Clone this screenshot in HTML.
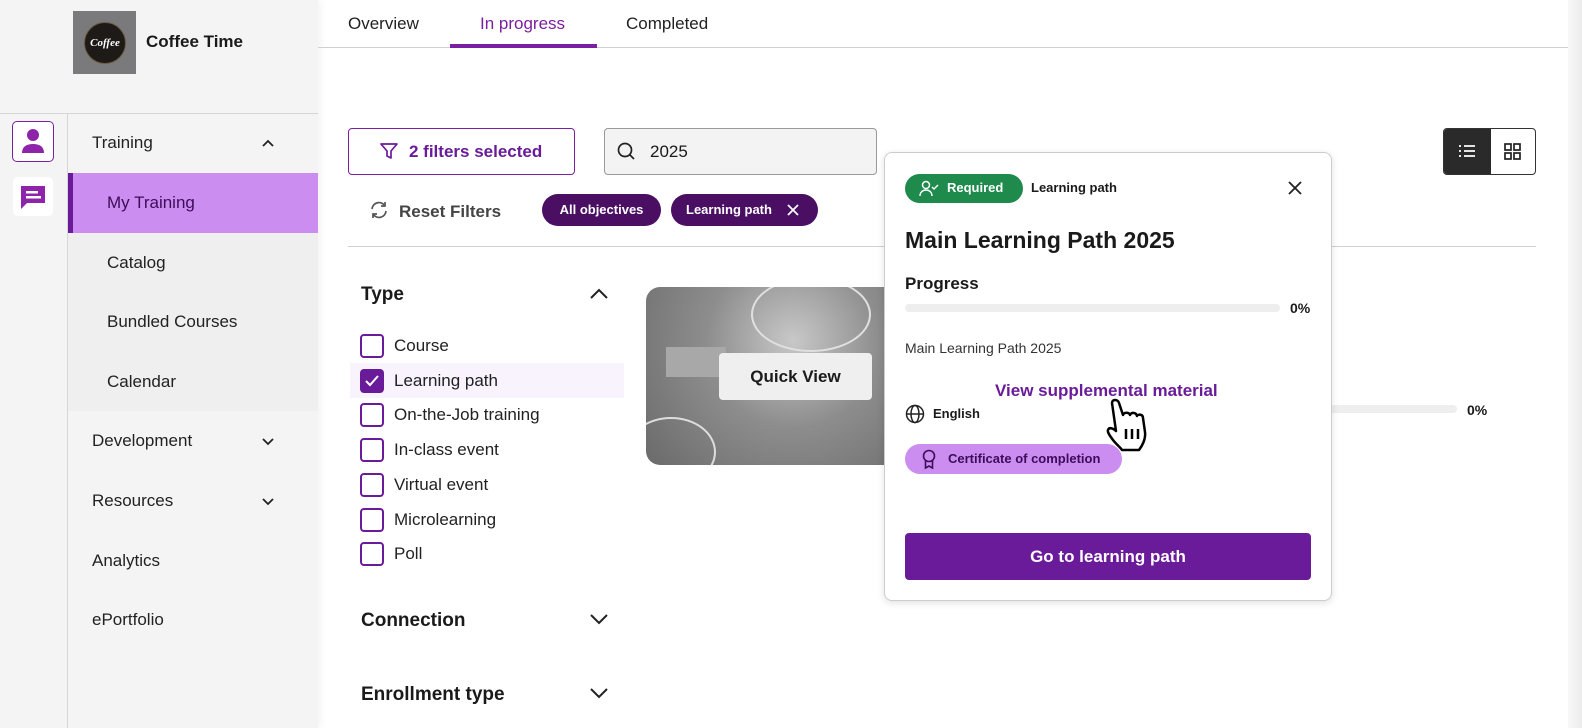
<!DOCTYPE html>
<html><head><meta charset="utf-8"><style>
*{margin:0;padding:0;box-sizing:border-box}
body{width:1582px;height:728px;overflow:hidden;background:#fff;font-family:"Liberation Sans",Arial,sans-serif;color:#1a1a1a;position:relative}
.a{position:absolute}
.nav{font-size:17px;color:#222}
.cb{position:absolute;left:360px;width:24px;height:24px;border:2px solid #6a1b9a;border-radius:4px}
.cl{position:absolute;left:394px;font-size:17px;color:#222}
</style></head><body>
<!-- sidebar -->
<div class="a" style="left:0;top:0;width:318px;height:728px;background:#f4f4f4;box-shadow:2px 0 8px rgba(0,0,0,.06)"></div>
<div class="a" style="left:0;top:113px;width:318px;height:1px;background:#d6d6d6"></div>
<div class="a" style="left:67px;top:114px;width:1px;height:614px;background:#d6d6d6"></div>
<div class="a" style="left:73px;top:11px;width:63px;height:63px;background:#7a7a7c"></div>
<div class="a" style="left:84px;top:22px;width:42px;height:42px;border-radius:50%;background:#1e1a17;border:1px solid #6b5a40;color:#fff;font:italic bold 11px 'Liberation Serif',serif;text-align:center;line-height:40px">Coffee</div>
<div class="a" style="left:146px;top:32px;font-size:17px;font-weight:bold">Coffee Time</div>
<div class="a" style="left:12px;top:121px;width:42px;height:41px;border:1.5px solid #7b1fa2;border-radius:5px;background:#fff"></div>
<svg class="a" style="left:19px;top:126px" width="28" height="30" viewBox="0 0 28 30"><circle cx="14" cy="9" r="6" fill="#8e24aa"/><path d="M3 27c0-6 4-9 11-9s11 3 11 9z" fill="#8e24aa"/></svg>
<div class="a" style="left:13px;top:177px;width:40px;height:39px;background:#fff;border-radius:5px"></div>
<svg class="a" style="left:18px;top:182px" width="30" height="30" viewBox="0 0 30 30"><path d="M3 4h24v17H9l-6 6z" fill="#8e24aa"/><rect x="8" y="9" width="12" height="2.5" fill="#fff"/><rect x="8" y="14" width="15" height="2.5" fill="#fff"/></svg>
<div class="a nav" style="left:92px;top:133px">Training</div>
<svg class="a" style="left:261px;top:138px" width="14" height="10"><path d="M2 8l5-5 5 5" stroke="#222" stroke-width="1.8" fill="none"/></svg>
<div class="a" style="left:68px;top:173px;width:250px;height:238px;background:#efefef"></div>
<div class="a" style="left:68px;top:173px;width:250px;height:60px;background:#cb8ef0;border-left:5px solid #6a1b9a"></div>
<div class="a nav" style="left:107px;top:193px;color:#3d0c5a">My Training</div>
<div class="a nav" style="left:107px;top:253px">Catalog</div>
<div class="a nav" style="left:107px;top:312px">Bundled Courses</div>
<div class="a nav" style="left:107px;top:372px">Calendar</div>
<div class="a nav" style="left:92px;top:431px">Development</div>
<div class="a nav" style="left:92px;top:491px">Resources</div>
<svg class="a" style="left:261px;top:436px" width="14" height="10"><path d="M2 3l5 5 5-5" stroke="#222" stroke-width="1.8" fill="none"/></svg>
<svg class="a" style="left:261px;top:496px" width="14" height="10"><path d="M2 3l5 5 5-5" stroke="#222" stroke-width="1.8" fill="none"/></svg>
<div class="a nav" style="left:92px;top:551px">Analytics</div>
<div class="a nav" style="left:92px;top:610px">ePortfolio</div>
<!-- tabs -->
<div class="a" style="left:318px;top:47px;width:1250px;height:1px;background:#d0d0d0"></div>
<div class="a nav" style="left:348px;top:14px">Overview</div>
<div class="a nav" style="left:480px;top:14px;color:#7b1fa2">In progress</div>
<div class="a" style="left:450px;top:44px;width:147px;height:4px;background:#7b1fa2"></div>
<div class="a nav" style="left:626px;top:14px">Completed</div>
<div class="a" style="left:1568px;top:0;width:14px;height:728px;background:linear-gradient(90deg,#f8f8f8,#ececec)"></div>
<!-- filters -->
<div class="a" style="left:348px;top:128px;width:227px;height:47px;border:1px solid #7b1fa2;border-radius:4px"></div>
<svg class="a" style="left:379px;top:141px" width="20" height="20" viewBox="0 0 20 20"><path d="M2 3h16l-6 7v7l-4-2v-5z" stroke="#6a1b9a" stroke-width="1.7" fill="none" stroke-linejoin="round"/></svg>
<div class="a" style="left:409px;top:142px;font-size:17px;font-weight:bold;color:#6a1b9a">2 filters selected</div>
<div class="a" style="left:604px;top:128px;width:273px;height:47px;border:1px solid #999;border-radius:4px;background:#f3f3f3"></div>
<svg class="a" style="left:616px;top:141px" width="20" height="20"><circle cx="9" cy="9" r="6.5" stroke="#222" stroke-width="1.7" fill="none"/><path d="M14 14l4 4" stroke="#222" stroke-width="1.7"/></svg>
<div class="a" style="left:650px;top:142px;font-size:17px">2025</div>
<svg class="a" style="left:369px;top:200px" width="20" height="20" viewBox="0 0 20 20"><path d="M3 9a7 7 0 0 1 13-3M17 11a7 7 0 0 1-13 3" stroke="#555" stroke-width="1.7" fill="none"/><path d="M16 2v4h-4M4 18v-4h4" stroke="#555" stroke-width="1.7" fill="none"/></svg>
<div class="a" style="left:399px;top:202px;font-size:17px;font-weight:bold;color:#444">Reset Filters</div>
<div class="a" style="left:542px;top:194px;width:119px;height:32px;border-radius:16px;background:#4a0e63;color:#fff;font-size:13px;font-weight:bold;text-align:center;line-height:32px">All objectives</div>
<div class="a" style="left:671px;top:194px;width:147px;height:32px;border-radius:16px;background:#4a0e63;color:#fff;font-size:13px;font-weight:bold;line-height:32px;padding-left:15px">Learning path</div>
<svg class="a" style="left:786px;top:203px" width="14" height="14"><path d="M2 2l10 10M12 2L2 12" stroke="#fff" stroke-width="1.8"/></svg>
<div class="a" style="left:348px;top:246px;width:1188px;height:1px;background:#d0d0d0"></div>
<div class="a" style="left:1443px;top:128px;width:93px;height:47px;border:1px solid #333;border-radius:4px;overflow:hidden"><div style="width:47px;height:47px;background:#2a2a2a"></div></div>
<svg class="a" style="left:1458px;top:143px" width="18" height="16"><g stroke="#fff" stroke-width="1.7"><path d="M1 3h2M6 3h11M1 8h2M6 8h11M1 13h2M6 13h11"/></g></svg>
<svg class="a" style="left:1504px;top:143px" width="18" height="18"><g stroke="#222" stroke-width="1.7" fill="none"><rect x="1" y="1" width="6" height="6"/><rect x="10" y="1" width="6" height="6"/><rect x="1" y="10" width="6" height="6"/><rect x="10" y="10" width="6" height="6"/></g></svg>
<!-- type list -->
<div class="a" style="left:361px;top:284px;font-size:19px;font-weight:bold">Type</div>
<svg class="a" style="left:589px;top:287px" width="20" height="14"><path d="M2 11l8-8 8 8" stroke="#222" stroke-width="2" fill="none"/></svg>
<div class="a" style="left:350px;top:363px;width:274px;height:35px;background:#f9f3fd"></div>
<div class="cb" style="top:334px"></div><div class="cl" style="top:336px">Course</div>
<div class="cb" style="top:369px;background:#6a1b9a"></div><svg class="a" style="left:363px;top:373px" width="18" height="16"><path d="M3 8l4 4 8-9" stroke="#fff" stroke-width="2" fill="none"/></svg><div class="cl" style="top:371px">Learning path</div>
<div class="cb" style="top:403px"></div><div class="cl" style="top:405px">On-the-Job training</div>
<div class="cb" style="top:438px"></div><div class="cl" style="top:440px">In-class event</div>
<div class="cb" style="top:473px"></div><div class="cl" style="top:475px">Virtual event</div>
<div class="cb" style="top:508px"></div><div class="cl" style="top:510px">Microlearning</div>
<div class="cb" style="top:542px"></div><div class="cl" style="top:544px">Poll</div>
<div class="a" style="left:361px;top:610px;font-size:19px;font-weight:bold">Connection</div>
<svg class="a" style="left:589px;top:612px" width="20" height="14"><path d="M2 3l8 8 8-8" stroke="#222" stroke-width="2" fill="none"/></svg>
<div class="a" style="left:361px;top:684px;font-size:19px;font-weight:bold">Enrollment type</div>
<svg class="a" style="left:589px;top:686px" width="20" height="14"><path d="M2 3l8 8 8-8" stroke="#222" stroke-width="2" fill="none"/></svg>
<!-- card image -->
<div class="a" style="left:646px;top:287px;width:245px;height:178px;border-radius:14px 0 0 14px;background:radial-gradient(circle at 60% 30%,#c8c8c8,#8d8d8d 45%,#6a6a6a);overflow:hidden">
<div style="position:absolute;left:105px;top:-10px;width:120px;height:75px;border-radius:50%;border:2px solid #e0e0e0"></div>
<div style="position:absolute;left:-20px;top:130px;width:90px;height:70px;border-radius:50%;border:2px solid #ddd"></div>
<div style="position:absolute;left:20px;top:60px;width:60px;height:30px;background:#a8a8a8"></div>
</div>
<div class="a" style="left:719px;top:353px;width:153px;height:47px;background:#efefef;border-radius:4px;font-size:17px;font-weight:bold;text-align:center;line-height:47px">Quick View</div>
<div class="a" style="left:1330px;top:405px;width:127px;height:8px;background:#eee;border-radius:4px"></div>
<div class="a" style="left:1467px;top:402px;font-size:14px;font-weight:bold">0%</div>
<!-- popover -->
<div class="a" style="left:884px;top:152px;width:448px;height:449px;background:#fff;border:1px solid #ccc;border-radius:8px;box-shadow:0 2px 8px rgba(0,0,0,.12)"></div>
<div class="a" style="left:905px;top:174px;width:118px;height:29px;border-radius:15px;background:#1e8a4c"></div>
<svg class="a" style="left:918px;top:179px" width="22" height="20"><circle cx="8" cy="6" r="3.5" stroke="#fff" stroke-width="1.5" fill="none"/><path d="M2 17c0-4 3-6 6-6s6 2 6 6" stroke="#fff" stroke-width="1.5" fill="none"/><path d="M14 8l2 2 4-4" stroke="#fff" stroke-width="1.5" fill="none"/></svg>
<div class="a" style="left:947px;top:180px;font-size:13px;font-weight:bold;color:#fff">Required</div>
<div class="a" style="left:1031px;top:180px;font-size:13px;font-weight:bold">Learning path</div>
<svg class="a" style="left:1287px;top:180px" width="16" height="16"><path d="M2 2l12 12M14 2L2 14" stroke="#222" stroke-width="1.8"/></svg>
<div class="a" style="left:905px;top:227px;font-size:23px;font-weight:bold">Main Learning Path 2025</div>
<div class="a" style="left:905px;top:274px;font-size:17px;font-weight:bold">Progress</div>
<div class="a" style="left:905px;top:304px;width:375px;height:8px;background:#eee;border-radius:4px"></div>
<div class="a" style="left:1290px;top:300px;font-size:14px;font-weight:bold">0%</div>
<div class="a" style="left:905px;top:340px;font-size:14px;color:#333">Main Learning Path 2025</div>
<div class="a" style="left:995px;top:381px;font-size:17px;font-weight:bold;color:#6a1b9a">View supplemental material</div>
<svg class="a" style="left:905px;top:404px" width="20" height="20"><g stroke="#222" stroke-width="1.5" fill="none"><circle cx="10" cy="10" r="8.5"/><ellipse cx="10" cy="10" rx="4" ry="8.5"/><path d="M1.5 10h17"/></g></svg>
<div class="a" style="left:933px;top:406px;font-size:13px;font-weight:bold">English</div>
<div class="a" style="left:905px;top:444px;width:217px;height:30px;border-radius:15px;background:#cb8ef0"></div>
<svg class="a" style="left:920px;top:448px" width="18" height="22"><circle cx="9" cy="8" r="5.5" stroke="#3d0c5a" stroke-width="1.6" fill="none"/><path d="M5.5 12v8l3.5-2 3.5 2v-8" stroke="#3d0c5a" stroke-width="1.6" fill="none"/></svg>
<div class="a" style="left:948px;top:451px;font-size:13px;font-weight:bold;color:#3d0c5a">Certificate of completion</div>
<div class="a" style="left:905px;top:533px;width:406px;height:47px;border-radius:4px;background:#6a1b9a;color:#fff;font-size:17px;font-weight:bold;text-align:center;line-height:47px">Go to learning path</div>
<!-- hand cursor -->
<svg class="a" style="left:1104px;top:397px" width="52" height="56" viewBox="0 0 52 56"><path d="M8 6c0-4 6-4 7 0l4 12c1-3 6-3 7 0 1-3 6-3 7 1 1-2 6-2 6 2l2 14c1 8-3 14-6 18H18c-2-3-6-6-9-10-3-4-6-8-5-10 1-3 5-2 8 1z" fill="#fff" stroke="#000" stroke-width="2.5" stroke-linejoin="round"/><path d="M22 32v10M28 32v10M34 32v10" stroke="#000" stroke-width="2.5"/></svg>
</body></html>
